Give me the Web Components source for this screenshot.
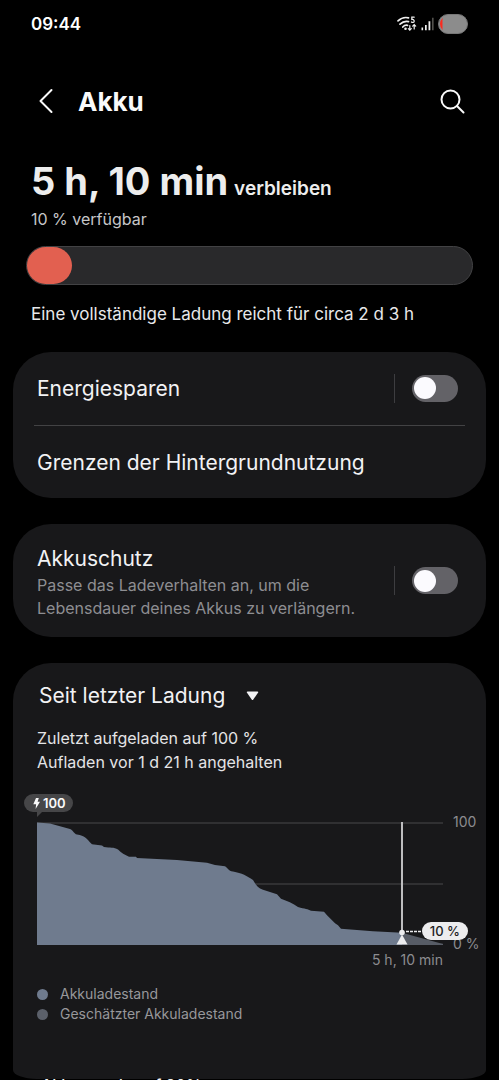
<!DOCTYPE html>
<html lang="de">
<head>
<meta charset="utf-8">
<meta name="viewport" content="width=device-width, initial-scale=1">
<title>Akku</title>
<style>
html, body { margin: 0; background: #000; }
body { font-family: Inter, Roboto, "Liberation Sans", sans-serif; color: #f2f2f4; }
</style>
</head>
<body>
<battery-screen></battery-screen>
<script>
function define(name, html, setup) {
  const template = document.createElement('template');
  template.innerHTML = html;
  customElements.define(name, class extends HTMLElement {
    constructor() {
      super();
      this.attachShadow({ mode: 'open' }).append(template.content.cloneNode(true));
    }
    connectedCallback() { if (setup) setup(this, this.shadowRoot); }
  });
}

define('status-bar', `
<style>
:host { display: flex; align-items: center; justify-content: space-between; height: 48px; padding: 0 31px; flex: none; }
time { font-size: 17px; line-height: 24px; font-weight: 600; color: #fff; }
.icons { display: flex; align-items: center; gap: 4px; }
svg { display: block; }
</style>
<time>09:44</time>
<div class="icons">
  <svg width="20" height="16" viewBox="0 0 20 16" fill="none" stroke="#f0f0f0" stroke-width="1.7" stroke-linecap="round">
    <path d="M1 4.800C4 2 8 1 11.500 1.800M3 8.200C5.500 5.800 8.500 5 11.500 5.600M5.800 11C7 9.600 8.800 9 10.500 9.300"/>
    <circle cx="8.500" cy="12.700" r="1.300" fill="#f0f0f0" stroke="none"/>
    <path d="M17.200 1.200H14.800V3.500C17.500 3 18 6.300 16 6.400C15.300 6.500 14.800 6.300 14.400 6" stroke-width="1.200"/>
    <path d="M12.800 9.500V14M11.300 12.700L12.800 14.200L14.300 12.700M17.200 13V8.700M15.700 10.200L17.200 8.700L18.700 10.200" stroke-width="1.200"/>
  </svg>
  <svg width="13" height="14" viewBox="0 0 13 14">
    <path d="M.5 10.500h1.600v2.700H.5zM4 8h1.700v5.200H4zM7.500 4.300h1.800v8.900H7.500z" fill="#f0f0f0"/>
    <path d="M11.200 .8h1.300v12.400h-1.300z" fill="#66645f"/>
  </svg>
  <svg width="30" height="20" viewBox="0 0 30 20">
    <defs><clipPath id="cell"><rect x="2" y="1.500" width="26" height="17" rx="8.500"/></clipPath></defs>
    <rect x=".5" y=".5" width="29" height="19" rx="9.500" fill="#8c8c8c" stroke="#777"/>
    <rect width="4.500" height="20" fill="#fb2a1e" clip-path="url(#cell)"/>
  </svg>
</div>`);

define('app-header', `
<style>
:host { display: flex; align-items: center; height: 106px; padding: 0 31px 0 30px; flex: none; }
button { display: grid; place-items: center; width: 32px; height: 40px; padding: 0; border: 0; background: none; color: #fafafa; }
h1 { flex: 1; margin: 0 0 0 16px; padding-top: 2px; font-size: 26px; line-height: 32px; font-weight: 700; color: #fafafa; }
svg { display: block; fill: none; stroke: currentColor; stroke-width: 2; stroke-linecap: round; }
</style>
<button type="button" aria-label="Zurück"><svg width="16" height="26" viewBox="0 0 16 26" stroke-linejoin="round"><path d="M13.500 2L2.500 13L13.500 24"/></svg></button>
<h1>Akku</h1>
<button type="button" aria-label="Suchen"><svg width="26" height="26" viewBox="0 0 26 26" stroke-width="2.200"><circle cx="11.500" cy="11.500" r="9"/><path d="M18 18L24.500 24.500"/></svg></button>`);

define('battery-summary', `
<style>
:host { display: block; padding: 4px 26px 0; }
.remaining, .available, .estimate { margin: 0; padding: 0 5px; }
.remaining { display: flex; align-items: baseline; gap: 6px; font-size: 19px; line-height: 24px; font-weight: 600; color: #ededed; white-space: nowrap; }
.remaining strong { font-size: 38px; line-height: 46px; font-weight: 700; }
.available { font-size: 16px; line-height: 24px; color: #c6c6c8; margin-top: 3px; }
.bar { height: 37px; margin: 15px 0; border: 1px solid #424244; border-radius: 20px; background: #29292b; }
.level { width: 10%; height: 37px; border-radius: 19px; background: #e26050; }
.estimate { font-size: 17px; line-height: 28px; color: #e8e8ea; }
</style>
<p class="remaining"><strong>5 h, 10 min</strong><span>verbleiben</span></p>
<p class="available">10 % verfügbar</p>
<div class="bar" role="img" aria-label="10 %"><div class="level"></div></div>
<p class="estimate">Eine vollständige Ladung reicht für circa 2 d 3 h</p>`);

define('settings-card', `
<style>
:host { display: block; border-radius: 38px; background: #18181a; }
</style><slot></slot>`);

define('toggle-switch', `
<style>
:host { display: block; padding-left: 17px; border-left: 1px solid #3d3d40; }
input { appearance: none; display: flex; align-items: center; width: 46px; height: 27px; margin: 1px 0; padding: 0 2px; box-sizing: border-box; border-radius: 14px; background: #636267; }
input::before { content: ""; width: 22px; height: 22px; border-radius: 50%; background: #fbfafe; }
input:checked { justify-content: flex-end; background: #3e7bf2; }
</style>
<input type="checkbox" role="switch">`, (host, root) => {
  root.querySelector('input').setAttribute('aria-label', host.getAttribute('label'));
});

define('settings-row', `
<style>
:host { display: flex; align-items: center; gap: 24px; min-height: 72px; padding: 0 28px 0 24px; }
:host([described]) { min-height: 113px; }
div { flex: 1; padding-top: 2px; }
h2 { margin: 0; font-size: 21px; line-height: 30px; font-weight: 400; color: #f2f2f4; }
p { margin: 0; font-size: 16px; line-height: 23px; color: #8e8e92; }
</style>
<div><h2><slot></slot></h2><p><slot name="note"></slot></p></div>
<slot name="control"></slot>`);

define('row-divider', `
<style>:host { display: block; height: 1px; margin: 1px 21px 0; background: #424244; }</style>`);

define('period-select', `
<style>
:host { display: flex; align-items: center; }
select { appearance: none; margin: 0; padding: 1px 34px 0 0; border: 0; background: none; font: inherit; font-size: 21px; line-height: 30px; color: #f2f2f4; }
svg { display: block; margin-left: -14px; pointer-events: none; fill: #f2f2f4; }
</style>
<select aria-label="Zeitraum"><option>Seit letzter Ladung</option></select>
<svg width="13" height="10" viewBox="0 0 13 10"><path d="M1.500 .5H11.500Q12.800 .5 12 1.700L7.300 8.500Q6.500 9.500 5.700 8.500L1 1.700Q.2 .5 1.500 .5Z"/></svg>`);

define('level-chart', `
<style>
:host { display: grid; grid-template-columns: 1fr 43px; row-gap: 5px; font-size: 14px; line-height: 20px; color: #8c8c90; }
.plot { position: relative; height: 123px; }
.area { display: block; width: 100%; height: 123px; }
.scale { display: flex; flex-direction: column; justify-content: space-between; margin: -10px 0 -9px; padding-left: 10px; white-space: nowrap; }
.left { text-align: right; }
.tag, .now, .mark { position: absolute; }
.tag { left: -13px; top: -28px; display: flex; align-items: center; gap: 3px; height: 18px; padding: 0 7px 0 9px; border-radius: 9px; background: #464648; color: #fafafa; font-size: 13px; font-weight: 600; }
.tag::after { content: ""; position: absolute; left: 13px; top: 17px; border-top: 6px solid #464648; border-right: 6px solid transparent; }
.mark { left: 90%; top: 0; width: 20px; height: 123px; margin-left: -10px; overflow: visible; }
.now { right: -25px; top: 100px; height: 18px; padding: 0 8px; border-radius: 9px; background: #ececee; color: #1c1c1e; font-size: 13px; line-height: 18px; font-weight: 500; white-space: nowrap; }
</style>
<div class="plot">
  <svg class="area" viewBox="0 0 406 123" preserveAspectRatio="none">
    <path d="M0 1H406M0 62H406M0 122.500H406" stroke="#303032" stroke-width="2"/>
    <path d="M365 110.700L406 122V123H365Z" fill="#575c66"/>
    <path d="M0 .5L13 1.500L33 7C36 8 37 12 40 12.500C48 14 49 16 55 22.300L65 23.500L67 25C73 26 77 25 81 27.500C84 31 88 33 92 34.700H99L100 36L140 38L170 40.700L178 43L188 44.300C191 46 191 49 196 49.500C205 51 210 54 216 58C219 63 221 66 226 67.700L240 72.300L244 76.700C250 79 256 81 261 85C268 87 271 87 274 88.700L287 89.700L290 93.300L298 101.300L301 103.300L304 106.700L336 109.300L365 110.700V123H0Z" fill="#6f7b8e"/>
  </svg>
  <svg class="mark" viewBox="0 0 20 123">
    <path d="M10 0V110" stroke="#bdbdbf" stroke-width="2"/>
    <path d="M14 109.500H30" stroke="#ececee" stroke-width="1.500" stroke-dasharray="3 1"/>
    <circle cx="10" cy="110.500" r="2.800" fill="#ececee"/>
    <path d="M10 112.500L15.500 122.500H4.500Z" fill="#ececee"/>
  </svg>
  <div class="tag"><svg width="7" height="11" viewBox="0 0 7 11" fill="#fafafa"><path d="M3 0H5.800L4.600 3.800H7L2.600 11L3.100 6.200H.3Z"/></svg>100</div>
  <div class="now">10 %</div>
</div>
<div class="scale"><span>100</span><span>0 %</span></div>
<div class="left">5 h, 10 min</div>`);

define('legend-item', `
<style>
:host { display: flex; align-items: center; gap: 12px; font-size: 14px; line-height: 20px; color: #97979a; }
i { width: 11px; height: 11px; border-radius: 50%; background: var(--dot); }
</style><i></i><slot></slot>`);

define('usage-card', `
<style>
:host { display: block; height: 416px; box-sizing: border-box; padding: 17px 0 0 24px; border-radius: 38px 38px 24px 24px / 38px 38px 9px 9px; background: #18181a; }
period-select { margin-left: 2px; }
p { margin: 15px 0 0; font-size: 16px; line-height: 24px; color: #e4e4e6; }
level-chart { margin-top: 48px; }
.legend { margin-top: 14px; }
h3 { margin: 51px 0 0 4px; font-size: 16px; line-height: 20px; font-weight: 500; color: #f2f2f4; white-space: nowrap; }
</style>
<period-select></period-select>
<p>Zuletzt aufgeladen auf 100 %<br>Aufladen vor 1 d 21 h angehalten</p>
<level-chart></level-chart>
<div class="legend">
  <legend-item style="--dot:#6f7b8e">Akkuladestand</legend-item>
  <legend-item style="--dot:#5b606a">Geschätzter Akkuladestand</legend-item>
</div>
<h3>Akku wurde auf 80%</h3>`);

define('battery-screen', `
<style>
:host { display: flex; flex-direction: column; height: 100vh; overflow: hidden; background: #000; }
main { flex: 1; min-height: 0; overflow-y: auto; scrollbar-width: none; }
.cards { display: grid; gap: 26px; padding: 24px 13px 0; }
</style>
<status-bar></status-bar>
<app-header></app-header>
<main>
  <battery-summary></battery-summary>
  <div class="cards">
    <settings-card>
      <settings-row>Energiesparen<toggle-switch slot="control" label="Energiesparen"></toggle-switch></settings-row>
      <row-divider></row-divider>
      <settings-row>Grenzen der Hintergrundnutzung</settings-row>
    </settings-card>
    <settings-card>
      <settings-row described>Akkuschutz<span slot="note">Passe das Ladeverhalten an, um die Lebensdauer deines Akkus zu verlängern.</span><toggle-switch slot="control" label="Akkuschutz"></toggle-switch></settings-row>
    </settings-card>
    <usage-card></usage-card>
  </div>
</main>`);
</script>
</body>
</html>
